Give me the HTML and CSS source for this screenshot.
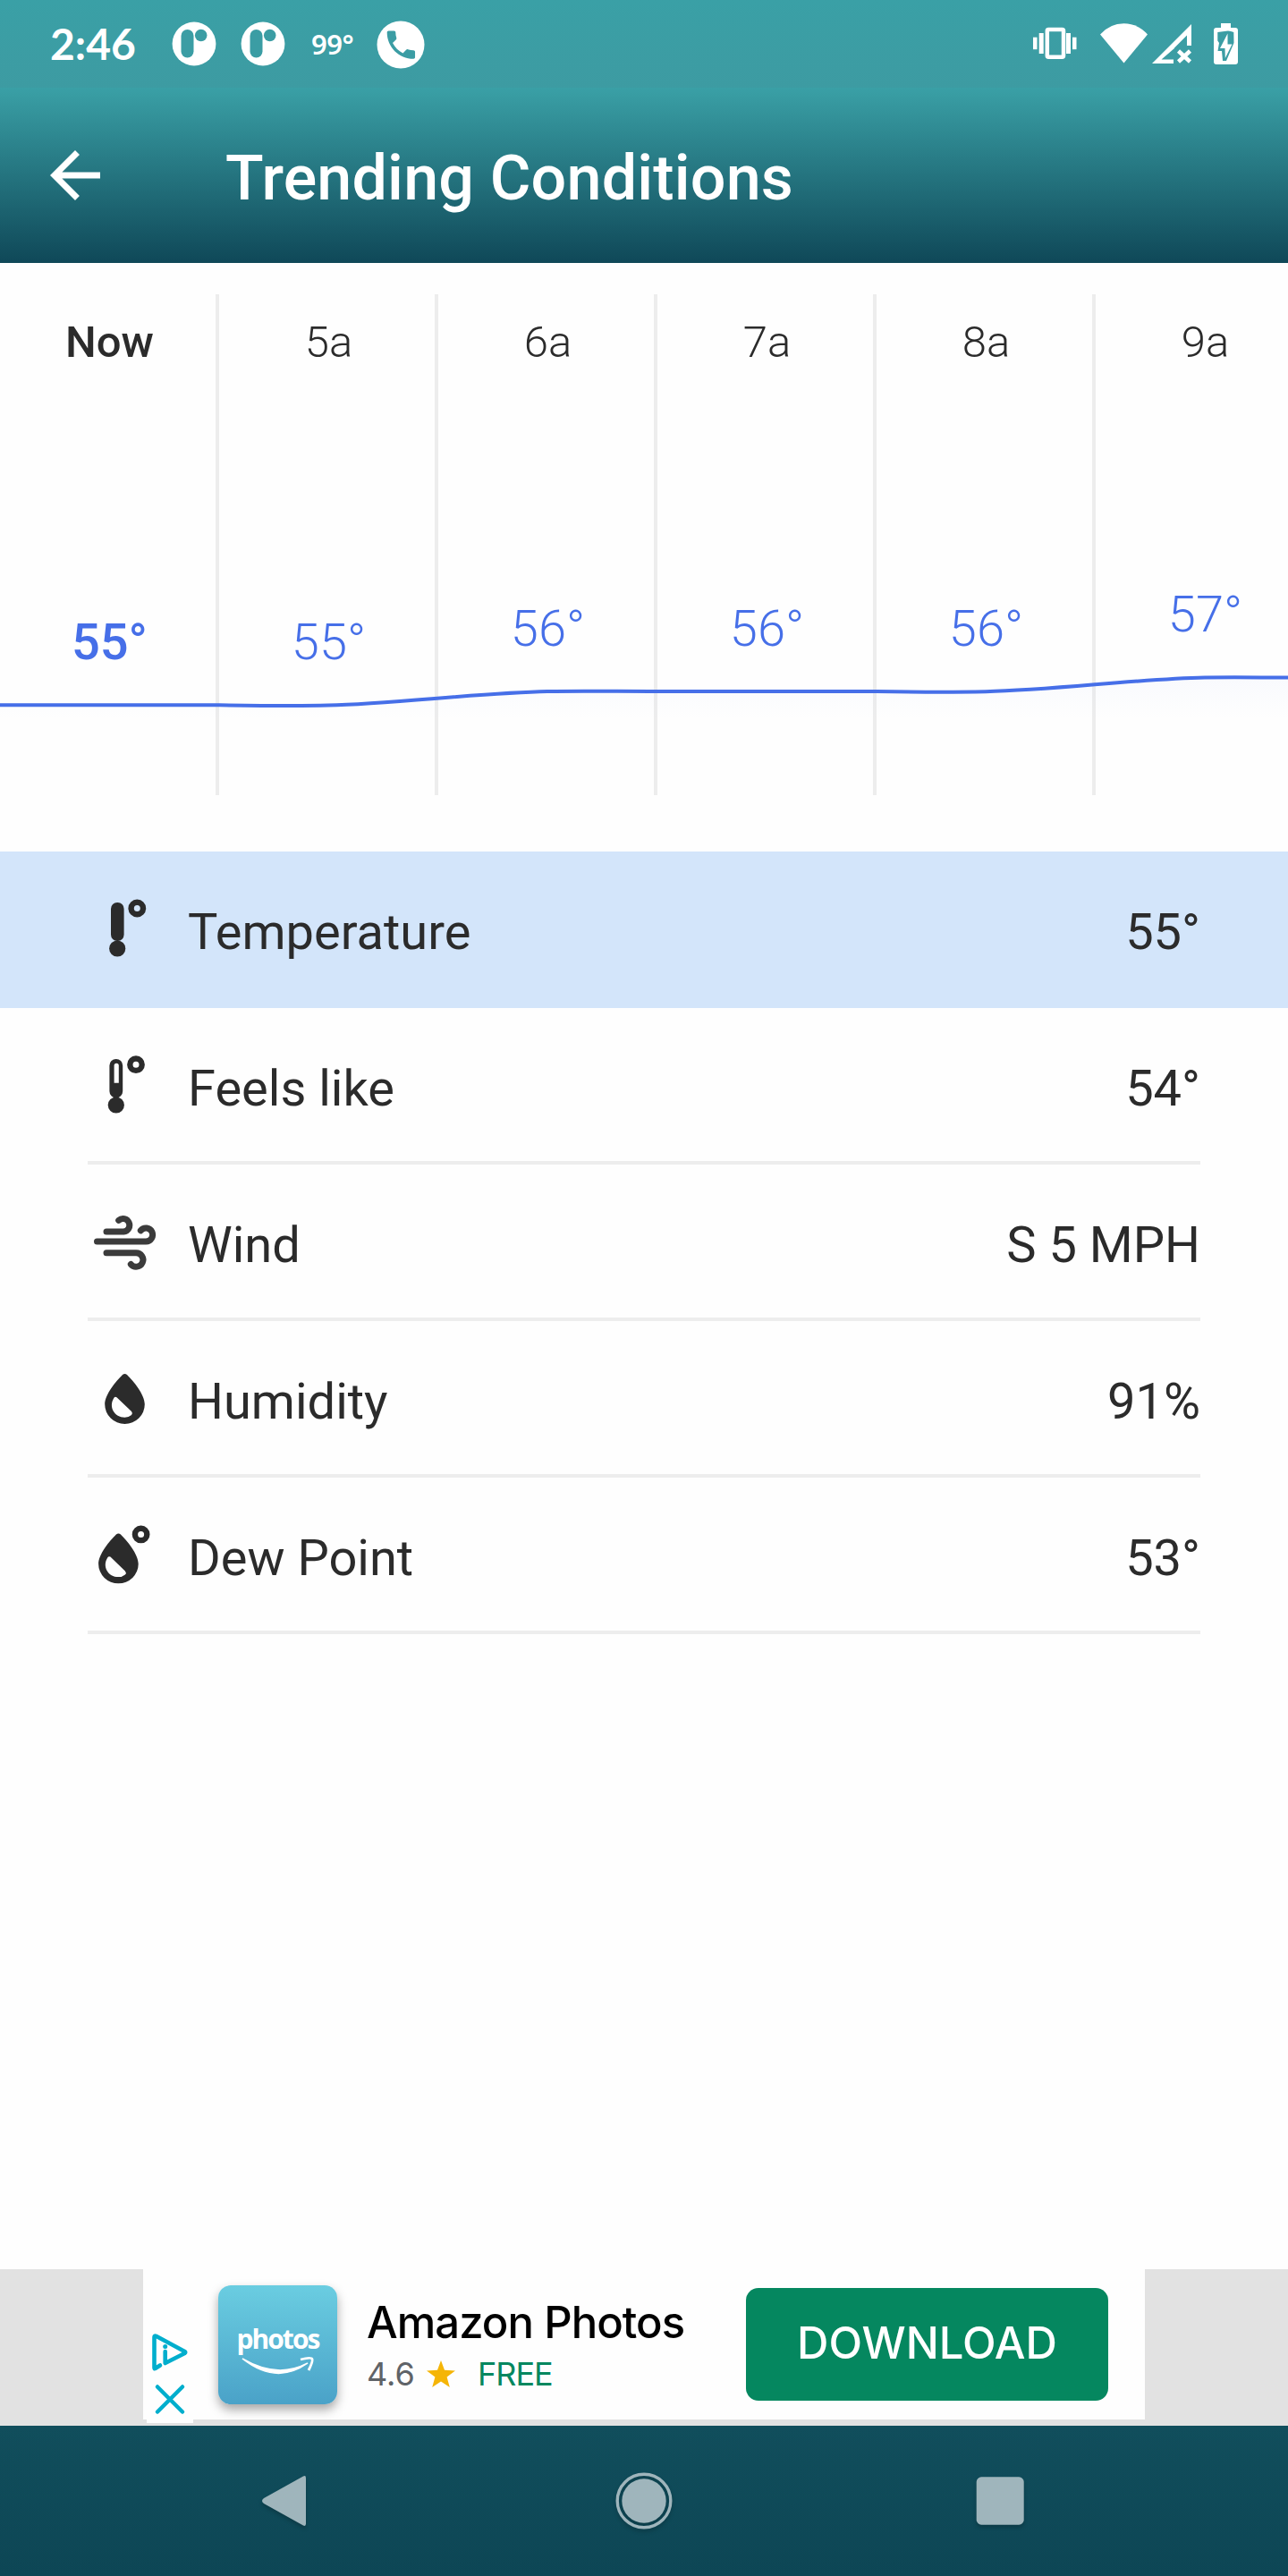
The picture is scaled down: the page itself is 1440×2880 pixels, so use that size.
FILE: index.html
```html
<!DOCTYPE html>
<html lang="en">
<head>
<meta charset="utf-8">
<title>Trending Conditions</title>
<link rel="stylesheet" href="styles.css">
</head>
<body>
<div class="screen">
  <div class="status">
    <span class="clock">2:46</span>
    <svg class="badge" viewBox="0 0 50 50"><circle cx="25" cy="25" r="24.4" fill="#fff"/><rect x="10.5" y="9" width="14" height="31.5" rx="7" fill="#3b9da4"/><circle cx="32.7" cy="15.5" r="6.8" fill="#3b9da4"/></svg>
    <svg class="badge badge-second" viewBox="0 0 50 50"><circle cx="25" cy="25" r="24.4" fill="#fff"/><rect x="10.5" y="9" width="14" height="31.5" rx="7" fill="#3b9da4"/><circle cx="32.7" cy="15.5" r="6.8" fill="#3b9da4"/></svg>
    <span class="outside">99°</span>
    <svg class="phone" viewBox="0 0 54 54"><circle cx="27" cy="27" r="26.5" fill="#fff"/><path transform="translate(6.5 6.2) scale(1.74)" fill="#3b9da4" d="M6.62 10.79c1.44 2.83 3.76 5.14 6.59 6.59l2.2-2.2c.27-.27.67-.36 1.02-.24 1.12.37 2.33.57 3.57.57.55 0 1 .45 1 1V20c0 .55-.45 1-1 1-9.39 0-17-7.61-17-17 0-.55.45-1 1-1h3.500c.55 0 1 .45 1 1 0 1.250.2 2.450.57 3.570.110.350.030.740-.250 1.020l-2.200 2.200z"/></svg>
    <svg class="system" viewBox="1150 20 240 60" fill="#fff">
      <rect x="1155" y="41.700" width="4.500" height="13.500"/><rect x="1161.700" y="37" width="5" height="23"/>
      <rect x="1170.800" y="33" width="18.200" height="30.800" rx="1.500" fill="none" stroke="#fff" stroke-width="4.500"/>
      <rect x="1192" y="37" width="5" height="23"/><rect x="1199" y="41.700" width="4.500" height="13.500"/>
      <path d="M1230 38.500Q1241 26.300 1256.500 26.300T1283 38.500L1256.500 70.500Z"/>
      <path fill-rule="evenodd" d="M1288 71L1332 27V51H1327V39.500L1313 53.500V54L1298.500 66.500H1312V71Z"/>
      <path d="M1317.500 57L1330.500 69M1330.500 57L1317.500 69" fill="none" stroke="#fff" stroke-width="4.500"/>
      <path d="M1365 26H1376V31H1381Q1384 31 1384 34V69Q1384 72 1381 72H1360Q1357 72 1357 69V34Q1357 31 1360 31H1365Z"/>
      <path d="M1373 34.500L1369 35 1361.300 36V45.500L1363 48 1361.500 57H1366L1367 68H1371L1379.500 48 1379.300 36 1376 35Z" fill="#3b9da4"/>
      <path d="M1372.500 37.500L1364 54H1369.500L1369.800 65L1377.500 49.500H1372.500Z"/>
    </svg>
  </div>
  <header class="appbar">
    <svg class="back" viewBox="0 0 24 24" fill="#fff"><path d="M20 11H7.830l5.590-5.590L12 4l-8 8 8 8 1.410-1.410L7.830 13H20v-2z"/></svg>
    <h1>Trending Conditions</h1>
  </header>

  <section class="chart">
    <div class="hour now"><span class="time">Now</span><span class="temp">55°</span></div>
    <div class="hour"><span class="time">5a</span><span class="temp">55°</span></div>
    <div class="hour"><span class="time">6a</span><span class="temp mid">56°</span></div>
    <div class="hour"><span class="time">7a</span><span class="temp mid">56°</span></div>
    <div class="hour"><span class="time">8a</span><span class="temp mid">56°</span></div>
    <div class="hour"><span class="time">9a</span><span class="temp high">57°</span></div>
    <svg class="curve" viewBox="0 740 1440 70">
      <defs><linearGradient id="fade" gradientUnits="userSpaceOnUse" x1="0" y1="755" x2="0" y2="804"><stop offset="0" stop-color="#466fe8" stop-opacity=".03"/><stop offset="1" stop-color="#466fe8" stop-opacity="0"/></linearGradient></defs>
      <path fill="url(#fade)" d="M0 788.300H245C290 789 340 789.300 367 788.600C440 786.500 540 774.500 612 773C650 772.300 690 773 735 773H980C1030 773.800 1070 773.800 1102 773.200C1180 771.500 1270 759 1347 757.500C1380 757 1410 757.500 1440 757.500V810H0Z"/>
      <path fill="none" stroke="#466fe8" stroke-width="4" d="M0 788.300H245C290 789 340 789.300 367 788.600C440 786.500 540 774.500 612 773C650 772.300 690 773 735 773H980C1030 773.800 1070 773.800 1102 773.200C1180 771.500 1270 759 1347 757.500C1380 757 1410 757.500 1440 757.500"/>
    </svg>
  </section>

  <main class="metrics">
    <div class="metric selected">
      <svg class="icon" viewBox="98 952 84 175" fill="#2b2b2b"><rect x="124" y="1009" width="14.600" height="43" rx="7"/><circle cx="131.200" cy="1060.500" r="9.100"/><circle cx="153.300" cy="1015.500" r="6.700" fill="none" stroke="#2b2b2b" stroke-width="6.400"/></svg>
      <span class="name">Temperature</span><span class="value">55°</span>
    </div>
    <div class="metric">
      <svg class="icon" viewBox="98 1127 84 175" fill="#2b2b2b"><path fill-rule="evenodd" d="M122.400 1191.300a7.400 7.400 0 0 1 14.800 0V1220a7.400 7.400 0 0 1-14.800 0ZM127.600 1191.300V1210.700H132.800V1191.300a2.600 2.600 0 0 0-5.200 0Z"/><circle cx="129.800" cy="1235.500" r="9.100"/><circle cx="152" cy="1190.200" r="6.700" fill="none" stroke="#2b2b2b" stroke-width="6.400"/></svg>
      <span class="name">Feels like</span><span class="value">54°</span>
    </div>
    <div class="metric">
      <svg class="icon" viewBox="98 1302 84 175" fill="none" stroke="#3b3b3b" stroke-width="7" stroke-linecap="round"><path d="M119 1377H138.300A7.250 7.250 0 1 0 132.700 1364.400"/><path d="M108.500 1388H163A7.500 7.500 0 1 0 157.300 1375.800"/><path d="M119 1400.800H152A7.700 7.700 0 1 1 146.300 1413.400"/></svg>
      <span class="name">Wind</span><span class="value">S 5 MPH</span>
    </div>
    <div class="metric">
      <svg class="icon" viewBox="98 1477 84 175" fill="#2b2b2b"><path fill-rule="evenodd" d="M137 1537Q139.500 1535 142 1537C149 1544 161.800 1559 161.800 1570A22.300 21.900 0 0 1 117.200 1570C117.200 1559 130 1544 137 1537ZM130.500 1562.200Q128.500 1561 127.300 1563C121 1573 128 1584.700 139.500 1584.700Q143.800 1584.700 147 1582Q148.800 1580 147 1578Z"/></svg>
      <span class="name">Humidity</span><span class="value">91%</span>
    </div>
    <div class="metric">
      <svg class="icon" viewBox="98 1652 84 175" fill="#2b2b2b"><path transform="translate(-7.100 178.400)" fill-rule="evenodd" d="M137 1537Q139.500 1535 142 1537C149 1544 161.800 1559 161.800 1570A22.300 21.900 0 0 1 117.200 1570C117.200 1559 130 1544 137 1537ZM130.500 1562.200Q128.500 1561 127.300 1563C121 1573 128 1584.700 139.500 1584.700Q143.800 1584.700 147 1582Q148.800 1580 147 1578Z"/><circle cx="157.600" cy="1715.400" r="6.700" fill="none" stroke="#2b2b2b" stroke-width="6.400"/></svg>
      <span class="name">Dew Point</span><span class="value">53°</span>
    </div>
  </main>

  <aside class="adstrip">
    <div class="ad">
      <svg class="choices" viewBox="0 0 52 110" fill="none" stroke="#00aecd">
        <rect width="52" height="110" fill="#fefefe" stroke="none"/>
        <path d="M15 45.500L9.500 49Q8.500 49.500 8.500 48V14Q8.500 12 10.500 12.800L42.500 30Q44 31 42.500 32L20.700 43V30" stroke-width="4.600" stroke-linejoin="round" stroke-linecap="round"/><circle cx="20.700" cy="24.500" r="2.500" fill="#00aecd" stroke="none"/>
        <path d="M12 69.500L40 97.500M40 69.500L12 97.500" stroke-width="4.500" stroke-linecap="round"/>
      </svg>
      <div class="appicon">
        <span>photos</span>
        <svg viewBox="0 0 82 22"><path d="M1 2Q39 32 74 7Q40 25 1 2Z" fill="#fff" stroke="#fff" stroke-width="1.500"/><path d="M66 3Q78 0 79 2.500T75 15" fill="none" stroke="#fff" stroke-width="2.800"/></svg>
      </div>
      <div class="adtext">
        <div class="adtitle">Amazon Photos</div>
        <div class="adsub"><span class="rating">4.6</span><svg class="star" viewBox="0 0 32 30"><path fill="#f5b507" d="M16 0l4 10.800 12 .6-9.400 7.200L25.800 30 16 23.500 6.200 30l3.200-11.400L0 11.400l12-.6z"/></svg><span class="free">FREE</span></div>
      </div>
      <div class="download"><span>DOWNLOAD</span></div>
    </div>
  </aside>

  <nav class="navbar">
    <svg viewBox="285 2756 70 80" fill="#9fb5bc"><path d="M339 2768.500Q342 2767 342 2770.500V2821.500Q342 2825 339 2823.500L295 2799Q291 2796 295 2793Z"/></svg>
    <svg viewBox="684 2756 70 80" fill="#9fb5bc"><circle cx="720" cy="2796" r="24.700"/><circle cx="720" cy="2796" r="29.800" fill="none" stroke="#9fb5bc" stroke-width="3.400"/></svg>
    <svg viewBox="1083 2756 70 80" fill="#9fb5bc"><rect x="1091.700" y="2769.300" width="53" height="53.400" rx="5.500"/></svg>
  </nav>
</div>
</body>
</html>
```

FILE: styles.css
```css
* { box-sizing: border-box; margin: 0; padding: 0; }
body { background: #fefefe; font-family: Roboto, "Liberation Sans", sans-serif; color: #2b2b2b; }
svg { display: block; flex: none; }
.screen { width: 1440px; height: 2880px; display: flex; flex-direction: column; overflow: hidden; }

.status { height: 98px; flex: none; display: flex; align-items: center; padding-left: 56px; color: #fff; background: linear-gradient(#3aa0a6, #3d9ba2); }
.clock { width: 136px; font: 700 48px/1 Lato, sans-serif; }
.badge { width: 50px; height: 50px; }
.badge-second { margin-left: 27px; }
.outside { width: 73px; margin-left: 29px; font: 600 31px/1 "Noto Sans", sans-serif; letter-spacing: -.5px; }
.phone { width: 54px; height: 54px; margin-top: 1px; }
.system { width: 240px; height: 60px; margin-left: auto; margin-right: 50px; margin-top: 2px; }

.appbar { height: 196px; flex: none; display: flex; align-items: center; padding-left: 42px; color: #fff; background: linear-gradient(#3aa0a6, #0f4858); }
.back { width: 84px; height: 84px; }
h1 { margin: 6px 0 0 126px; font-size: 70px; font-weight: 500; line-height: 82px; letter-spacing: .18px; }

.chart { position: relative; height: 658px; flex: none; display: flex; padding-top: 35px; }
.hour { width: 245px; height: 560px; flex: none; border-right: 4px solid #ededed; display: flex; flex-direction: column; align-items: center; font-weight: 300; padding-left: 4px; }
.hour:nth-child(6) { border-right-color: transparent; }
.now { font-weight: 500; }
.time { margin-top: 25px; font-size: 49px; line-height: 58px; }
.temp { margin-top: 273px; font-size: 56px; line-height: 66px; color: #466fe8; }
.mid { margin-top: 258px; }
.high { margin-top: 242px; }
.curve { position: absolute; left: 0; top: 446px; width: 1440px; height: 70px; }

.metric { height: 175px; margin: 0 98px; display: flex; align-items: center; border-bottom: 4px solid #ededed; font-size: 56px; line-height: 66px; }
.selected { margin: 0; padding: 0 98px; background: #d3e5fa; border: 0; }
.icon { width: 84px; height: 175px; align-self: flex-start; }
.name { margin-left: 28px; flex: 1; align-self: flex-start; margin-top: 57px; }
.value { align-self: flex-start; margin-top: 57px; }

.adstrip { margin-top: auto; height: 175px; flex: none; background: #e2e2e2; padding: 0 160px; }
.ad { height: 168px; background: #fefefe; display: flex; align-items: flex-start; padding-left: 4px; }
.choices { width: 52px; height: 110px; margin-top: 62px; }
.appicon { width: 133px; height: 133px; margin: 18px 0 0 28px; border-radius: 14px; background: linear-gradient(#6acde1, #4aa2c8); box-shadow: 0 6px 12px rgba(0,0,0,.35); color: #fff; display: flex; flex-direction: column; align-items: center; }
.appicon span { margin-top: 42px; font: 700 30px/36px "Open Sans", sans-serif; letter-spacing: -2px; }
.appicon svg { width: 82px; height: 22px; margin-top: 2px; }
.adtext { width: 421px; padding: 30px 0 0 33px; white-space: nowrap; }
.adtitle { color: #000; font: 500 49px/60px Inter, sans-serif; letter-spacing: -.95px; }
.adsub { margin-top: 5px; display: flex; align-items: center; font: 400 36px/44px Inter, sans-serif; }
.rating { width: 67px; color: #5f6368; }
.star { width: 32px; height: 30px; }
.free { margin-left: 25px; color: #05875f; letter-spacing: -1px; }
.download { margin: 21px 0 0 36px; width: 405px; height: 126px; border-radius: 14px; background: #05875f; color: #fff; display: flex; align-items: center; justify-content: center; font: 500 49px/60px Inter, sans-serif; }
.download span { margin-top: -2px; }

.navbar { height: 168px; flex: none; display: flex; align-items: center; justify-content: space-between; padding: 0 287px 0 285px; background: linear-gradient(#114e5c, #0d4655); }
.navbar svg { width: 70px; height: 80px; filter: drop-shadow(0 3px 2px rgba(0,0,0,.2)); }
```
